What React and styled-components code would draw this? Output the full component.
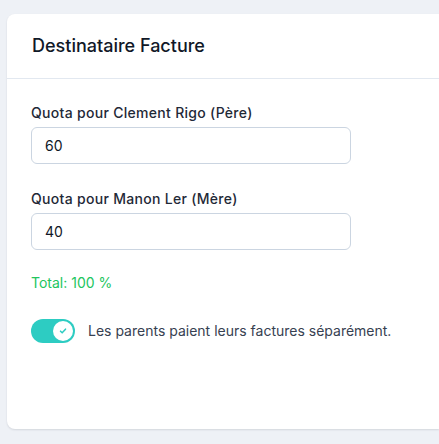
import React from "react";
import styled, { createGlobalStyle } from "styled-components";

const Global = createGlobalStyle`
  html, body { margin: 0; padding: 0; background: #eef1f6; overflow: hidden; }
  body { font-family: Inter, "Noto Sans", sans-serif; -webkit-font-smoothing: antialiased; }
  * { box-sizing: border-box; }
`;

const Page = styled.div`
  padding: 14px 0 0 7px;
  width: 439px;
  height: 444px;
`;

const Card = styled.section`
  width: 432px;
  height: 415px;
  background: #fff;
  border-radius: 8px 0 0 8px;
  box-shadow: 0 1px 2px rgba(15, 23, 42, 0.12);
  display: flex;
  flex-direction: column;
`;

const Header = styled.header`
  height: 65px;
  border-bottom: 1px solid #e2e8f0;
  display: flex;
  align-items: center;
  padding: 0 25px;
`;

const Title = styled.h2`
  margin: 0;
  font-size: 18px;
  font-weight: 500;
  color: #111827;
  line-height: 24px;
`;

const Body = styled.div`
  padding: 24px 24px;
  display: flex;
  flex-direction: column;
`;

const Field = styled.div`
  display: flex;
  flex-direction: column;
  gap: 4px;
  margin-bottom: ${(p) => (p.$last ? "23px" : "25px")};
`;

const Label = styled.label`
  font-size: 14px;
  line-height: 20px;
  font-weight: 500;
  letter-spacing: 0.3px;
  color: #1f2937;
`;

const Input = styled.input`
  width: 320px;
  height: 37px;
  border: 1px solid #cbd5e1;
  border-radius: 6px;
  padding: 0 13px;
  font-family: inherit;
  font-size: 14px;
  color: #111827;
  background: #fff;
  outline: none;
`;

const Total = styled.div`
  font-size: 14px;
  line-height: 20px;
  color: #22c55e;
`;

const ToggleRow = styled.div`
  display: flex;
  align-items: center;
  gap: 13px;
  margin-top: 26px;
`;

const Switch = styled.span`
  width: 44px;
  height: 24px;
  border-radius: 12px;
  background: ${(p) => (p.$on ? "#2dccc2" : "#cbd5e1")};
  display: flex;
  align-items: center;
  justify-content: ${(p) => (p.$on ? "flex-end" : "flex-start")};
  padding: 2px;
`;

const Knob = styled.span`
  width: 20px;
  height: 20px;
  border-radius: 50%;
  background: #fff;
  display: flex;
  align-items: center;
  justify-content: center;
`;

const ToggleText = styled.span`
  font-size: 14px;
  line-height: 20px;
  color: #374151;
`;

export default function App() {
  return (
    <Page>
      <Global />
      <Card>
        <Header>
          <Title>Destinataire Facture</Title>
        </Header>
        <Body>
          <Field>
            <Label>Quota pour Clement Rigo (Père)</Label>
            <Input defaultValue="60" />
          </Field>
          <Field $last>
            <Label>Quota pour Manon Ler (Mère)</Label>
            <Input defaultValue="40" />
          </Field>
          <Total>Total: 100 %</Total>
          <ToggleRow>
            <Switch $on>
              <Knob>
                <svg width="10" height="10" viewBox="0 0 12 12" fill="none">
                  <path d="M3 6.2l2 2 4-4.4" stroke="#2dccc2" strokeWidth="1.8" strokeLinecap="round" strokeLinejoin="round" />
                </svg>
              </Knob>
            </Switch>
            <ToggleText>Les parents paient leurs factures séparément.</ToggleText>
          </ToggleRow>
        </Body>
      </Card>
    </Page>
  );
}
